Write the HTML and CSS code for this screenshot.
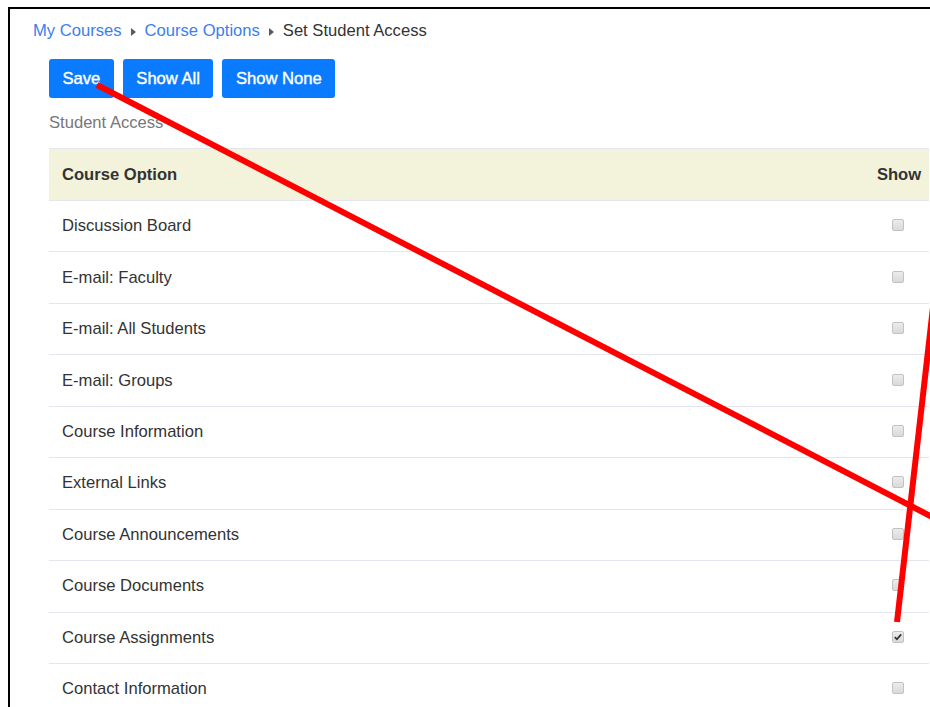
FILE: index.html
```html
<!DOCTYPE html>
<html lang="en">
<head>
<meta charset="utf-8">
<title>Set Student Access</title>
<link rel="stylesheet" href="styles.css">
</head>
<body>
<div class="frame">
  <nav class="crumbs">
    <a href="#" class="crumb-link">My Courses</a>
    <span class="crumb-sep"></span>
    <a href="#" class="crumb-link">Course Options</a>
    <span class="crumb-sep"></span>
    <span class="crumb-current">Set Student Access</span>
  </nav>

  <div class="actions">
    <button class="btn" type="button">Save</button>
    <button class="btn" type="button">Show All</button>
    <button class="btn" type="button">Show None</button>
  </div>

  <div class="section-label">Student Access</div>

  <div class="access-table">
    <div class="row head">
      <div class="cell">Course Option</div>
      <div class="cell show">Show</div>
    </div>
    <div class="row"><div class="cell">Discussion Board</div><div class="cell show"><input type="checkbox" class="chk"></div></div>
    <div class="row"><div class="cell">E-mail: Faculty</div><div class="cell show"><input type="checkbox" class="chk"></div></div>
    <div class="row"><div class="cell">E-mail: All Students</div><div class="cell show"><input type="checkbox" class="chk"></div></div>
    <div class="row"><div class="cell">E-mail: Groups</div><div class="cell show"><input type="checkbox" class="chk"></div></div>
    <div class="row"><div class="cell">Course Information</div><div class="cell show"><input type="checkbox" class="chk"></div></div>
    <div class="row"><div class="cell">External Links</div><div class="cell show"><input type="checkbox" class="chk"></div></div>
    <div class="row"><div class="cell">Course Announcements</div><div class="cell show"><input type="checkbox" class="chk"></div></div>
    <div class="row"><div class="cell">Course Documents</div><div class="cell show"><input type="checkbox" class="chk"></div></div>
    <div class="row"><div class="cell">Course Assignments</div><div class="cell show"><input type="checkbox" class="chk" checked></div></div>
    <div class="row"><div class="cell">Contact Information</div><div class="cell show"><input type="checkbox" class="chk"></div></div>
  </div>
</div>

<svg class="markup" width="930" height="707" viewBox="0 0 930 707" aria-hidden="true">
  <line x1="97" y1="85" x2="940" y2="521" />
  <line x1="897" y1="622" x2="935" y2="290" />
</svg>
</body>
</html>
```

FILE: styles.css
```css
html, body {
  margin: 0;
  padding: 0;
}

body {
  width: 930px;
  height: 707px;
  overflow: hidden;
  position: relative;
  background: #ffffff;
  font-family: "Liberation Sans", Arial, sans-serif;
  font-size: 16.6px;
  color: #333333;
}

/* outer page frame */
.frame {
  margin: 7px 0 0 8px;
  width: 960px;
  height: 760px;
  border-top: 2px solid #000;
  border-left: 2px solid #000;
  box-sizing: border-box;
  padding: 10px 0 0 23px;
}

/* breadcrumb trail */
.crumbs {
  display: flex;
  align-items: center;
  height: 24px;
  line-height: 24px;
}

.crumb-link {
  color: #3b80ee;
  text-decoration: none;
}

.crumb-current {
  color: #333333;
}

.crumb-sep {
  width: 0;
  height: 0;
  border-left: 5px solid #5a5a5a;
  border-top: 4px solid transparent;
  border-bottom: 4px solid transparent;
  margin: 1px 9px 0 9px;
}

/* action buttons */
.actions {
  display: flex;
  gap: 9px;
  margin: 16px 0 0 16px;
}

.btn {
  height: 39px;
  padding: 0 13.5px;
  border: none;
  border-radius: 3px;
  background: #0a7bff;
  color: #ffffff;
  font-family: inherit;
  font-size: 16.6px;
  font-weight: normal;
  -webkit-text-stroke: 0.4px #ffffff;
  line-height: 39px;
  cursor: pointer;
}

.section-label {
  margin: 13px 0 0 16px;
  color: #777777;
  line-height: 24px;
}

/* course option access table */
.access-table {
  margin: 13px 0 0 16px;
  width: 880px;
  border-top: 1px solid #e3e6ec;
}

.row {
  display: grid;
  grid-template-columns: 1fr 60px;
  align-items: center;
  height: 51.44px;
  box-sizing: border-box;
  border-top: 1px solid #e3e6ec;
}

.row.head {
  border-top: none;
  height: 51px;
  background: #f3f3dc;
  font-weight: bold;
}

.cell {
  padding: 0 13px;
}

.cell.show {
  padding: 0;
  display: flex;
  justify-content: center;
  align-items: center;
}

.chk {
  -webkit-appearance: none;
  appearance: none;
  display: block;
  width: 12px;
  height: 12px;
  margin: 0 3px 2px 0;
  border: 1px solid #c2c2c2;
  border-radius: 2px;
  background: linear-gradient(#ececec, #d9d9d9);
  box-sizing: border-box;
}

.chk:checked {
  background:
    url("data:image/svg+xml,%3Csvg xmlns='http://www.w3.org/2000/svg' width='10' height='10' viewBox='0 0 10 10'%3E%3Cpath d='M1.8 5.2 L3.9 7.3 L8.2 2.3' fill='none' stroke='%23333' stroke-width='1.8'/%3E%3C/svg%3E") center / 10px 10px no-repeat,
    linear-gradient(#ececec, #d9d9d9);
}

/* red annotation strokes drawn over the page */
.markup {
  position: absolute;
  left: 0;
  top: 0;
  pointer-events: none;
}

.markup line {
  stroke: #ff0000;
  stroke-width: 6;
  stroke-linecap: butt;
}
```
